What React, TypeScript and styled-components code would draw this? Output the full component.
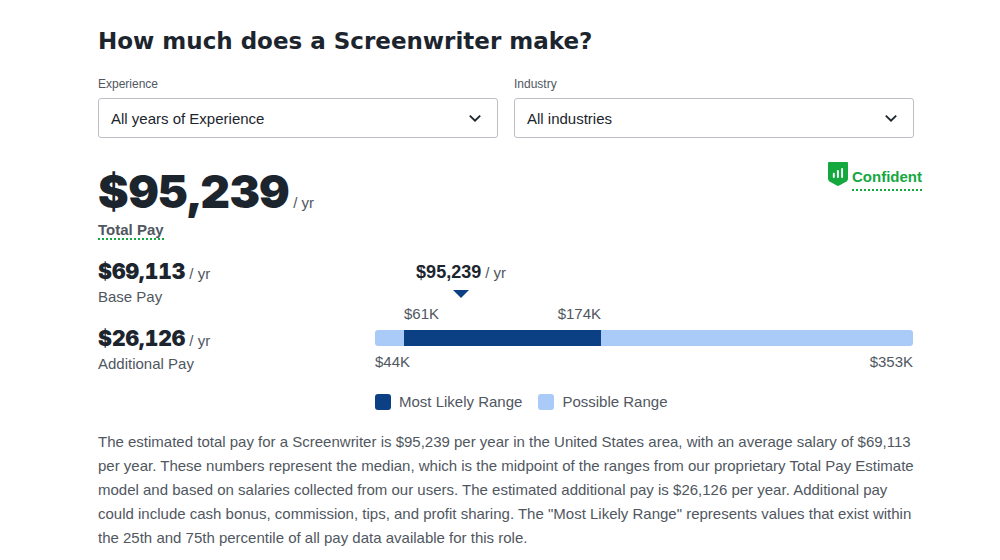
import React from "react";
import styled, { createGlobalStyle } from "styled-components";

const ink = "#1c252e";
const grey = "#50575f";
const green = "#14a83f";
const navy = "#0c4085";
const sky = "#aacbf7";

const GlobalStyle = createGlobalStyle`
  *, *::before, *::after { box-sizing: border-box; }
  body {
    margin: 0;
    background: #fff;
    color: ${grey};
    font-family: "Liberation Sans", Arial, sans-serif;
    font-size: 15px;
    line-height: 24px;
  }
`;

const Page = styled.main`
  padding: 24px 86px 8px 98px;
`;

const Title = styled.h1`
  margin: 0 0 18px;
  color: ${ink};
  font-family: "DejaVu Sans", sans-serif;
  font-size: 23px;
  font-weight: 700;
  line-height: 34px;
`;

const Filters = styled.div`
  display: grid;
  grid-template-columns: 1fr 1fr;
  gap: 16px;
`;

const Field = styled.div`
  display: flex;
  flex-direction: column;
  gap: 6px;
`;

const FieldLabel = styled.label`
  font-size: 12px;
  line-height: 16px;
`;

const SelectBox = styled.div`
  display: grid;
  grid-template-columns: 1fr 38px;
  align-items: center;
`;

const Select = styled.select`
  grid-area: 1 / 1 / 2 / 3;
  appearance: none;
  width: 100%;
  height: 40px;
  padding: 1px 38px 0 12px;
  border: 1px solid #bcbfc4;
  border-radius: 3px;
  background: #fff;
  color: ${ink};
  font: inherit;
`;

const Chevron = styled.svg`
  grid-area: 1 / 2 / 2 / 3;
  width: 14px;
  height: 14px;
  margin-left: 8px;
  pointer-events: none;
`;

const Summary = styled.section`
  display: flex;
  justify-content: space-between;
  align-items: flex-start;
  margin: 24px -8px 0 0;
`;

const Amount = styled.div<{ $size: number; $line: number }>`
  color: ${ink};
  font-family: Inter, "Arial Black", sans-serif;
  font-size: ${(p) => p.$size}px;
  font-weight: 900;
  font-variant-numeric: tabular-nums;
  line-height: ${(p) => p.$line}px;
`;

const Unit = styled.span`
  margin-left: 4px;
  color: ${grey};
  font-family: "Liberation Sans", Arial, sans-serif;
  font-size: 15px;
  font-weight: 400;
  line-height: 16px;
`;

const Term = styled.button<{ $tone: string; $line: number }>`
  display: block;
  padding: 2px 0 0;
  border: 0;
  border-bottom: 2px dotted ${green};
  background: none;
  color: ${(p) => p.$tone};
  font: inherit;
  font-weight: 700;
  line-height: ${(p) => p.$line}px;
`;

const Confidence = styled.div`
  display: flex;
  align-items: flex-start;
  gap: 4px;
`;

const Shield = styled.svg`
  width: 20px;
  height: 24px;
`;

const Breakdown = styled.section`
  display: grid;
  grid-template-columns: 277px 1fr;
  margin-top: 18px;
`;

const Parts = styled.div`
  display: flex;
  flex-direction: column;
  gap: 16px;
`;

const Chart = styled.div`
  padding: 2px 1px 0 0;
`;

const Marker = styled.div`
  display: flex;
  flex-direction: column;
  align-items: center;
  width: 32%;
  white-space: nowrap;
`;

const MarkerAmount = styled.div`
  color: ${ink};
  font-size: 18px;
  font-weight: 700;
  line-height: 24px;
`;

const Pointer = styled.svg`
  width: 16px;
  height: 8px;
  margin: 6px 0 4px;
`;

const scale = "29fr 197fr 312fr";

const LikelyLabels = styled.div`
  display: grid;
  grid-template-columns: ${scale};
`;

const LikelyPair = styled.div`
  grid-column: 2;
  display: flex;
  justify-content: space-between;
`;

const Bar = styled.div`
  display: grid;
  grid-template-columns: ${scale};
  height: 16px;
  margin: 4px 0;
  overflow: hidden;
  border-radius: 3px;
  background: ${sky};
`;

const Likely = styled.div`
  grid-column: 2;
  background: ${navy};
`;

const Ends = styled.div`
  display: flex;
  justify-content: space-between;
`;

const Legend = styled.div`
  display: flex;
  gap: 16px;
  margin-top: 16px;
`;

const LegendItem = styled.div`
  display: flex;
  align-items: center;
  gap: 8px;
`;

const Swatch = styled.span<{ $color: string }>`
  width: 16px;
  height: 16px;
  border-radius: 3px;
  background: ${(p) => p.$color};
`;

const Description = styled.p`
  margin: 16px 0 0;
`;

function Dropdown({ id, label, value }: { id: string; label: string; value: string }) {
  return (
    <Field>
      <FieldLabel htmlFor={id}>{label}</FieldLabel>
      <SelectBox>
        <Select id={id}>
          <option>{value}</option>
        </Select>
        <Chevron viewBox="0 0 14 14" aria-hidden="true">
          <path d="M1.8 4.6 7 9.7l5.2-5.1" fill="none" stroke={ink} strokeWidth="1.8" />
        </Chevron>
      </SelectBox>
    </Field>
  );
}

function Part({ amount, name }: { amount: string; name: string }) {
  return (
    <div>
      <Amount $size={21} $line={27}>
        {amount}
        <Unit>/ yr</Unit>
      </Amount>
      <div>{name}</div>
    </div>
  );
}

export default function App() {
  return (
    <>
      <GlobalStyle />
      <Page>
        <Title>How much does a Screenwriter make?</Title>
        <Filters>
          <Dropdown id="experience" label="Experience" value="All years of Experience" />
          <Dropdown id="industry" label="Industry" value="All industries" />
        </Filters>
        <Summary>
          <div>
            <Amount $size={46} $line={58}>
              $95,239
              <Unit>/ yr</Unit>
            </Amount>
            <Term type="button" $tone={grey} $line={16}>Total Pay</Term>
          </div>
          <Confidence>
            <Shield viewBox="0 0 20 24" aria-hidden="true">
              <path d="M1 0h18q1 0 1 1v15.8q0 1.800-1.500 2.700L11.200 23.600q-1.200.6-2.400 0L1.500 19.500Q0 18.600 0 16.800V1q0-1 1-1z" fill={green} />
              <path d="M5.800 11.600v3.400M9.900 8.900v6.100M14.100 6.900v8.100" stroke="#fff" strokeWidth="1.900" strokeLinecap="round" />
            </Shield>
            <Term type="button" $tone={green} $line={25}>Confident</Term>
          </Confidence>
        </Summary>
        <Breakdown>
          <Parts>
            <Part amount="$69,113" name="Base Pay" />
            <Part amount="$26,126" name="Additional Pay" />
          </Parts>
          <Chart>
            <Marker>
              <MarkerAmount>
                $95,239
                <Unit>/ yr</Unit>
              </MarkerAmount>
              <Pointer viewBox="0 0 16 8" aria-hidden="true">
                <path d="M0 0h16L8 8z" fill={navy} />
              </Pointer>
            </Marker>
            <LikelyLabels>
              <LikelyPair>
                <span>$61K</span>
                <span>$174K</span>
              </LikelyPair>
            </LikelyLabels>
            <Bar>
              <Likely />
            </Bar>
            <Ends>
              <span>$44K</span>
              <span>$353K</span>
            </Ends>
            <Legend>
              <LegendItem>
                <Swatch $color={navy} />
                Most Likely Range
              </LegendItem>
              <LegendItem>
                <Swatch $color={sky} />
                Possible Range
              </LegendItem>
            </Legend>
          </Chart>
        </Breakdown>
        <Description>
          The estimated total pay for a Screenwriter is $95,239 per year in the United States area, with an average
          salary of $69,113 per year. These numbers represent the median, which is the midpoint of the ranges from our
          proprietary Total Pay Estimate model and based on salaries collected from our users. The estimated additional
          pay is $26,126 per year. Additional pay could include cash bonus, commission, tips, and profit sharing. The
          "Most Likely Range" represents values that exist within the 25th and 75th percentile of all pay data
          available for this role.
        </Description>
      </Page>
    </>
  );
}
